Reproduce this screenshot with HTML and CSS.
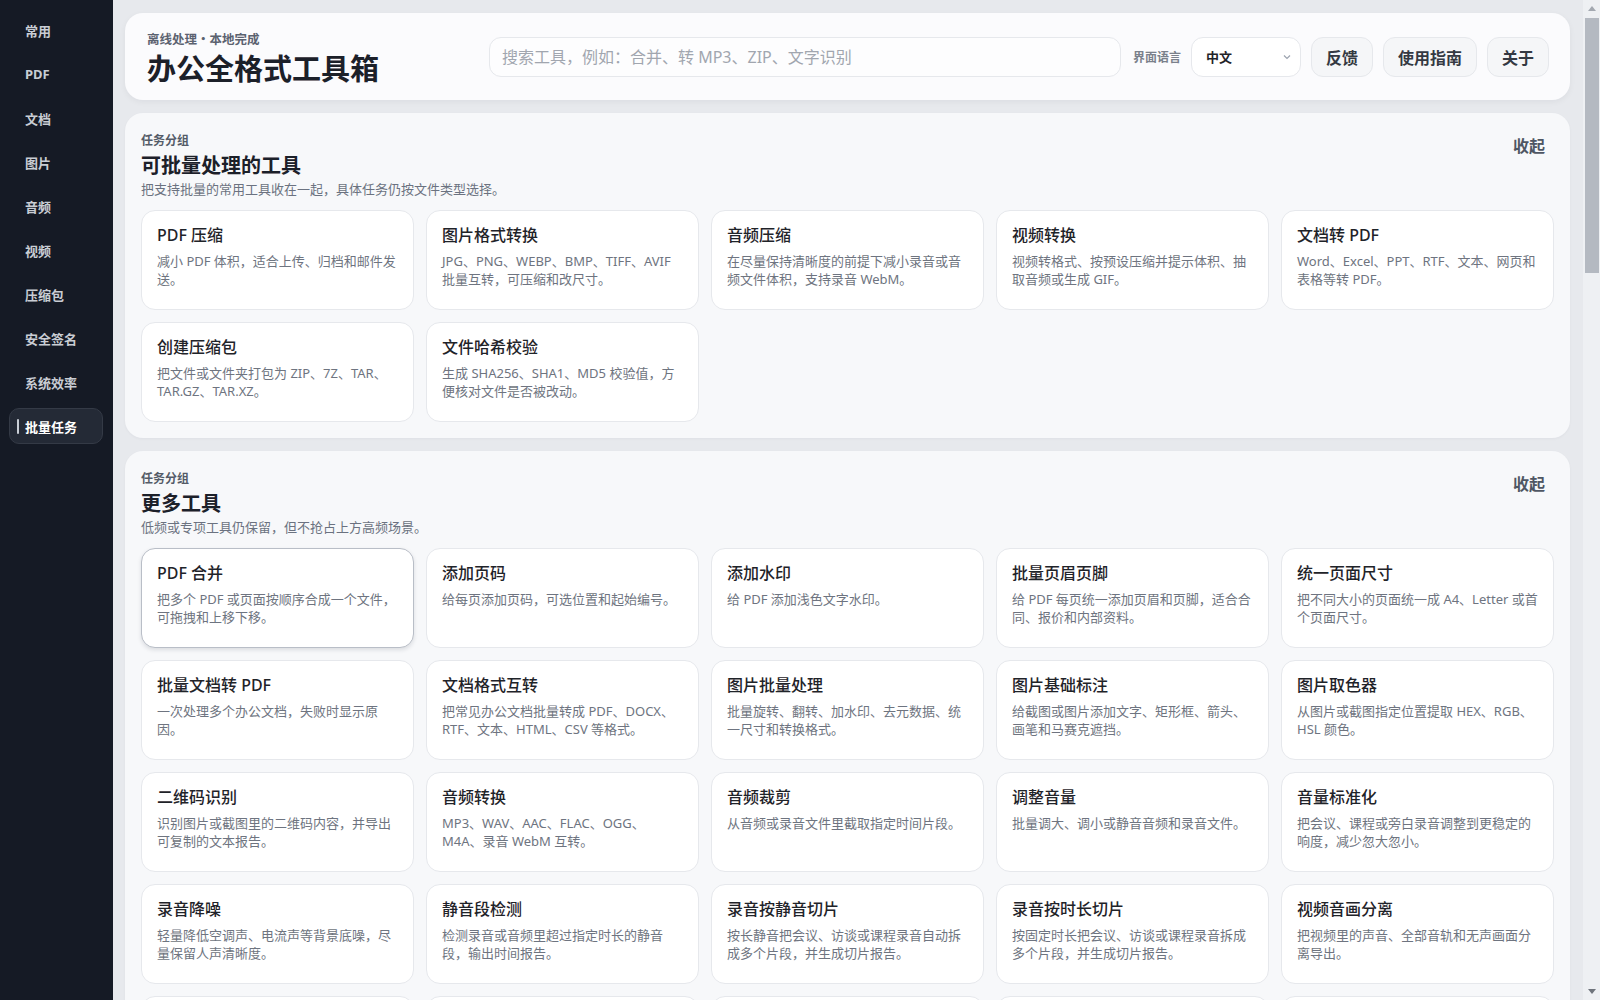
FILE: index.html
```html
<!DOCTYPE html>
<html lang="zh-CN">
<head>
  <meta charset="UTF-8" />
  <meta name="viewport" content="width=device-width, initial-scale=1.0"/>
  <title>办公全格式工具箱</title>
  <link rel="stylesheet" href="styles.css">
</head>
<body>
  <nav class="sidebar">
    <a class="nav-item">常用</a>
    <a class="nav-item">PDF</a>
    <a class="nav-item">文档</a>
    <a class="nav-item">图片</a>
    <a class="nav-item">音频</a>
    <a class="nav-item">视频</a>
    <a class="nav-item">压缩包</a>
    <a class="nav-item">安全签名</a>
    <a class="nav-item">系统效率</a>
    <a class="nav-item active">批量任务</a>
  </nav>

  <main class="workspace">
    <header class="topbar">
      <div class="brand">
        <div class="brand-tag">离线处理・本地完成</div>
        <h1 class="brand-title">办公全格式工具箱</h1>
      </div>
      <input class="search" type="text" placeholder="搜索工具，例如：合并、转 MP3、ZIP、文字识别">
      <span class="lang-label">界面语言</span>
      <div class="lang-select">
        <span>中文</span>
        <svg width="10" height="10" viewBox="0 0 10 10"><path d="M2 3.5 5 6.5 8 3.5" fill="none" stroke="#9ca3af" stroke-width="1.2"/></svg>
      </div>
      <button class="top-btn">反馈</button>
      <button class="top-btn">使用指南</button>
      <button class="top-btn">关于</button>
    </header>

    <section class="group">
      <div class="group-head">
        <div>
          <div class="group-eyebrow">任务分组</div>
          <h2 class="group-title">可批量处理的工具</h2>
          <p class="group-desc">把支持批量的常用工具收在一起，具体任务仍按文件类型选择。</p>
        </div>
        <button class="collapse">收起</button>
      </div>
      <div class="tool-grid">
        <div class="tool"><h3>PDF 压缩</h3><p>减小 PDF 体积，适合上传、归档和邮件发送。</p></div>
        <div class="tool"><h3>图片格式转换</h3><p>JPG、PNG、WEBP、BMP、TIFF、AVIF 批量互转，可压缩和改尺寸。</p></div>
        <div class="tool"><h3>音频压缩</h3><p>在尽量保持清晰度的前提下减小录音或音频文件体积，支持录音 WebM。</p></div>
        <div class="tool"><h3>视频转换</h3><p>视频转格式、按预设压缩并提示体积、抽取音频或生成 GIF。</p></div>
        <div class="tool"><h3>文档转 PDF</h3><p>Word、Excel、PPT、RTF、文本、网页和表格等转 PDF。</p></div>
        <div class="tool"><h3>创建压缩包</h3><p>把文件或文件夹打包为 ZIP、7Z、TAR、TAR.GZ、TAR.XZ。</p></div>
        <div class="tool"><h3>文件哈希校验</h3><p>生成 SHA256、SHA1、MD5 校验值，方便核对文件是否被改动。</p></div>
      </div>
    </section>

    <section class="group">
      <div class="group-head">
        <div>
          <div class="group-eyebrow">任务分组</div>
          <h2 class="group-title">更多工具</h2>
          <p class="group-desc">低频或专项工具仍保留，但不抢占上方高频场景。</p>
        </div>
        <button class="collapse">收起</button>
      </div>
      <div class="tool-grid">
        <div class="tool focused"><h3>PDF 合并</h3><p>把多个 PDF 或页面按顺序合成一个文件，可拖拽和上移下移。</p></div>
        <div class="tool"><h3>添加页码</h3><p>给每页添加页码，可选位置和起始编号。</p></div>
        <div class="tool"><h3>添加水印</h3><p>给 PDF 添加浅色文字水印。</p></div>
        <div class="tool"><h3>批量页眉页脚</h3><p>给 PDF 每页统一添加页眉和页脚，适合合同、报价和内部资料。</p></div>
        <div class="tool"><h3>统一页面尺寸</h3><p>把不同大小的页面统一成 A4、Letter 或首个页面尺寸。</p></div>

        <div class="tool"><h3>批量文档转 PDF</h3><p>一次处理多个办公文档，失败时显示原因。</p></div>
        <div class="tool"><h3>文档格式互转</h3><p>把常见办公文档批量转成 PDF、DOCX、RTF、文本、HTML、CSV 等格式。</p></div>
        <div class="tool"><h3>图片批量处理</h3><p>批量旋转、翻转、加水印、去元数据、统一尺寸和转换格式。</p></div>
        <div class="tool"><h3>图片基础标注</h3><p>给截图或图片添加文字、矩形框、箭头、画笔和马赛克遮挡。</p></div>
        <div class="tool"><h3>图片取色器</h3><p>从图片或截图指定位置提取 HEX、RGB、HSL 颜色。</p></div>

        <div class="tool"><h3>二维码识别</h3><p>识别图片或截图里的二维码内容，并导出可复制的文本报告。</p></div>
        <div class="tool"><h3>音频转换</h3><p>MP3、WAV、AAC、FLAC、OGG、M4A、录音 WebM 互转。</p></div>
        <div class="tool"><h3>音频裁剪</h3><p>从音频或录音文件里截取指定时间片段。</p></div>
        <div class="tool"><h3>调整音量</h3><p>批量调大、调小或静音音频和录音文件。</p></div>
        <div class="tool"><h3>音量标准化</h3><p>把会议、课程或旁白录音调整到更稳定的响度，减少忽大忽小。</p></div>

        <div class="tool"><h3>录音降噪</h3><p>轻量降低空调声、电流声等背景底噪，尽量保留人声清晰度。</p></div>
        <div class="tool"><h3>静音段检测</h3><p>检测录音或音频里超过指定时长的静音段，输出时间报告。</p></div>
        <div class="tool"><h3>录音按静音切片</h3><p>按长静音把会议、访谈或课程录音自动拆成多个片段，并生成切片报告。</p></div>
        <div class="tool"><h3>录音按时长切片</h3><p>按固定时长把会议、访谈或课程录音拆成多个片段，并生成切片报告。</p></div>
        <div class="tool"><h3>视频音画分离</h3><p>把视频里的声音、全部音轨和无声画面分离导出。</p></div>

        <div class="tool"><h3>视频裁剪</h3><p>按开始和结束时间截取视频片段，不重新编码时速度更快。</p></div>
        <div class="tool"><h3>视频压缩</h3><p>按目标体积或画质预设压缩视频，方便发送和归档。</p></div>
        <div class="tool"><h3>视频抽帧</h3><p>按时间间隔从视频里导出图片帧。</p></div>
        <div class="tool"><h3>解压文件</h3><p>解压 ZIP、7Z、RAR、TAR 等常见压缩包。</p></div>
        <div class="tool"><h3>文字识别</h3><p>从图片或扫描件里识别文字，并导出可编辑文本。</p></div>
      </div>
    </section>
  </main>

  <!-- page scroll rail, kept visible on the right edge -->
  <div class="scroll-rail" aria-hidden="true">
    <div class="rail-arrow up"></div>
    <div class="rail-thumb"></div>
    <div class="rail-arrow down"></div>
  </div>
</body>
</html>
```

FILE: styles.css
```css
* {
  box-sizing: border-box;
}

html, body {
  margin: 0;
  padding: 0;
}

body {
  display: grid;
  grid-template-columns: 113px 1fr;
  padding-right: 17px;
  background: #e7e9ed;
  font-family: "Noto Sans", "Noto Sans CJK SC", sans-serif;
  color: #1f2329;
}

h1, h2, h3, p {
  margin: 0;
}

button {
  font-family: inherit;
  cursor: pointer;
}

/* left navigation */
.sidebar {
  position: sticky;
  top: 0;
  height: 100vh;
  background: #151a25;
  padding: 12px 10px 0 9px;
  display: flex;
  flex-direction: column;
  gap: 8px;
}

.nav-item {
  position: relative;
  height: 36px;
  display: flex;
  align-items: center;
  padding-left: 15px;
  font-size: 13px;
  font-weight: 700;
  color: #c9cdd4;
  border: 1px solid transparent;
  border-radius: 10px;
}

.nav-item.active {
  background: #242a36;
  border-color: #343a46;
  color: #ffffff;
}

.nav-item.active::before {
  content: "";
  position: absolute;
  left: 7px;
  top: 10px;
  width: 2px;
  height: 15px;
  border-radius: 1px;
  background: #c9ced6;
}

/* main column */
.workspace {
  padding: 13px 13px 24px 12px;
  display: flex;
  flex-direction: column;
  gap: 13px;
  min-width: 0;
}

.topbar {
  height: 87px;
  background: #fbfbfd;
  border-radius: 18px;
  box-shadow: 0 2px 6px rgba(20, 26, 40, 0.05);
  display: flex;
  align-items: center;
  gap: 10px;
  padding: 0 21px 0 22px;
}

.brand {
  width: 320px;
  margin-right: 12px;
  padding-top: 5px;
  flex-shrink: 0;
}

.brand-tag {
  font-size: 12.5px;
  font-weight: 700;
  color: #5b6270;
  line-height: 16px;
}

.brand-title {
  margin-top: 3px;
  font-size: 29px;
  font-weight: 700;
  line-height: 36px;
  color: #1c2029;
}

.search {
  flex: 1;
  min-width: 0;
  height: 40px;
  border: 1px solid #e6e8ec;
  border-radius: 12px;
  background: #fdfdfe;
  padding: 0 12px;
  font-family: inherit;
  font-size: 16px;
  color: #1f2329;
  outline: none;
}

.search::placeholder {
  color: #a1a6af;
}

.lang-label {
  margin-left: 2px;
  font-size: 12px;
  font-weight: 700;
  color: #7a808b;
}

.lang-select {
  width: 110px;
  height: 40px;
  border: 1px solid #e6e8ec;
  border-radius: 12px;
  background: #ffffff;
  display: flex;
  align-items: center;
  justify-content: space-between;
  padding: 0 8px 0 14px;
  font-size: 13px;
  font-weight: 700;
  color: #1f2329;
}

.top-btn {
  height: 40px;
  padding: 0 14px;
  border: 1px solid #e6e8ec;
  border-radius: 12px;
  background: #f5f6f8;
  font-size: 16px;
  font-weight: 700;
  color: #343942;
}

/* tool groups */
.group {
  background: #f7f8fa;
  border-radius: 18px;
  padding: 20px 16px 16px;
  box-shadow: 0 1px 3px rgba(20, 26, 40, 0.04);
}

.group-head {
  display: flex;
  justify-content: space-between;
  align-items: flex-start;
}

.group-eyebrow {
  font-size: 12px;
  font-weight: 700;
  line-height: 16px;
  color: #545b67;
}

.group-title {
  margin-top: 3px;
  font-size: 20px;
  font-weight: 700;
  line-height: 28px;
  color: #1c2029;
}

.group-desc {
  margin-top: 0;
  font-size: 13px;
  line-height: 18px;
  color: #6b7280;
}

.collapse {
  height: 28px;
  margin-top: -2px;
  padding: 0 9px;
  border: none;
  background: none;
  font-size: 16px;
  font-weight: 700;
  color: #4f5663;
}

.tool-grid {
  margin-top: 12px;
  display: grid;
  grid-template-columns: repeat(5, 1fr);
  gap: 12px;
}

.tool {
  min-height: 100px;
  background: #ffffff;
  border: 1px solid #e6e8ec;
  border-radius: 14px;
  padding: 13px 15px 12px;
}

.tool.focused {
  border-color: #b9bec7;
  box-shadow: 0 2px 4px rgba(20, 26, 40, 0.12);
}

.tool h3 {
  font-size: 16px;
  font-weight: 500;
  line-height: 22px;
  color: #1f2329;
}

.tool p {
  margin-top: 6px;
  font-size: 13px;
  line-height: 18px;
  color: #6e7480;
}

/* scroll rail */
.scroll-rail {
  position: fixed;
  top: 0;
  right: 0;
  width: 17px;
  height: 100vh;
  background: #eef0f3;
  display: flex;
  flex-direction: column;
  align-items: center;
}

.rail-arrow {
  width: 0;
  height: 0;
  border-left: 4px solid transparent;
  border-right: 4px solid transparent;
  margin: 6px 0;
}

.rail-arrow.up {
  border-bottom: 5px solid #a3a8b0;
}

.rail-arrow.down {
  margin-top: auto;
  border-top: 5px solid #6f747c;
}

.rail-thumb {
  width: 14px;
  height: 255px;
  background: #b4b9c1;
  margin-top: 1px;
}
```
